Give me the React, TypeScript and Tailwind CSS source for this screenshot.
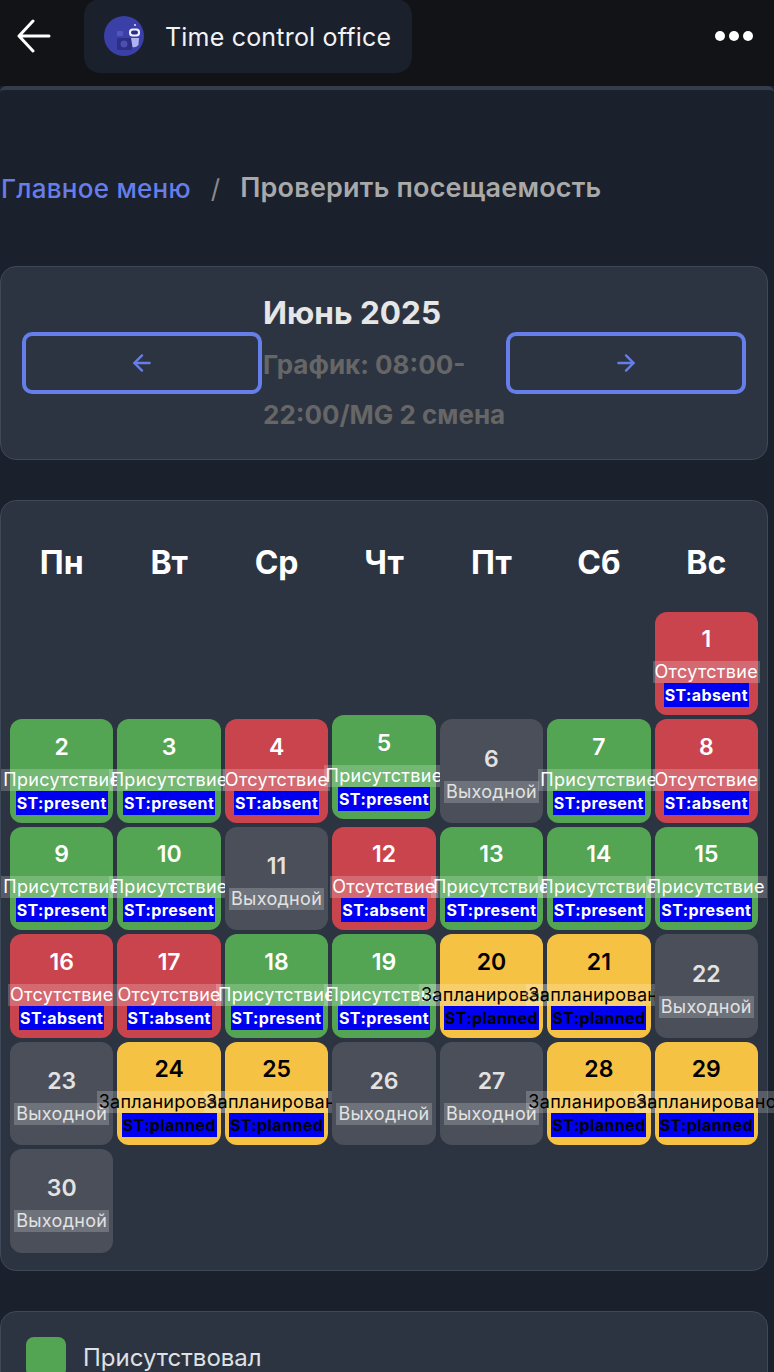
import { ArrowLeft, ArrowRight } from 'lucide-react';

type Status = 'present' | 'absent' | 'planned' | 'off';

const WEEKDAYS = ['Пн', 'Вт', 'Ср', 'Чт', 'Пт', 'Сб', 'Вс'];

const DAYS: Status[] = [
  'absent',
  'present', 'present', 'absent', 'present', 'off', 'present', 'absent',
  'present', 'present', 'off', 'absent', 'present', 'present', 'present',
  'absent', 'absent', 'present', 'present', 'planned', 'planned', 'off',
  'off', 'planned', 'planned', 'off', 'off', 'planned', 'planned',
  'off',
];

const CELL_STYLES: Record<Status, string> = {
  present: 'bg-[#53a553] text-white',
  absent: 'bg-[#ca444e] text-white',
  planned: 'bg-[#f5c244] text-black',
  off: 'bg-[#4a4f59] text-[#e2e2e2]',
};

const LABELS: Record<Status, string> = {
  present: 'Присутствие',
  absent: 'Отсутствие',
  planned: 'Запланировано',
  off: 'Выходной',
};

function BotAvatar() {
  return (
    <svg viewBox="0 0 40 40" className="h-10 w-10 shrink-0">
      <circle cx="20" cy="20" r="20" fill="#3b3fa8" />
      <rect x="13" y="15" width="6" height="5" rx="1" fill="#5156bd" />
      <rect x="13" y="22" width="15" height="12" rx="1.5" fill="#2c2f85" />
      <circle cx="20" cy="28" r="3.5" fill="#4a4fb0" />
      <circle cx="31" cy="9" r="1" fill="#dfe3ff" />
      <rect x="25" y="12.5" width="11" height="8" rx="3.5" fill="#eef0ff" />
      <rect x="27" y="14.5" width="7" height="4" rx="2" fill="#2a2d8a" />
      <path d="M27 22h8l-0.5 7q-3 3-6 2z" fill="#aeb4f0" />
    </svg>
  );
}

function DayCell({ day, status }: { day: number; status: Status }) {
  return (
    <div
      className={`relative flex aspect-square flex-col items-center justify-center rounded-[12px] pt-[3px] ${CELL_STYLES[status]} ${
        day === 5 ? '-translate-y-1' : ''
      }`}
    >
      <div className="mb-[6px] text-[23px] leading-[32px] font-semibold">{day}</div>
      <div className="bg-white/20 px-[2px] text-[18px] leading-[22px] tracking-[0.3px] whitespace-nowrap">{LABELS[status]}</div>
      {status !== 'off' && (
        <div className="bg-[#0000f0] px-[1px] text-[16px] leading-[24px] font-bold tracking-[0.4px] whitespace-nowrap">
          ST:{status}
        </div>
      )}
    </div>
  );
}

export default function App() {
  return (
    <div className="h-[1372px] w-[774px] overflow-hidden bg-[#1a202c] font-['Inter',sans-serif]">
      <header className="flex h-[86px] items-start justify-between bg-[#111316] pr-[21px] pl-[17px]">
        <div className="flex items-start gap-[33px]">
          <svg viewBox="0 0 34 34" className="mt-[19px] h-[34px] w-[34px]" fill="none" stroke="white" strokeWidth="3" strokeLinecap="round" strokeLinejoin="round">
            <path d="M32 17H2M16 2L2 17l14 15" />
          </svg>
          <div className="-mt-[1px] flex h-[74px] w-[328px] items-center gap-[21px] rounded-[16px] bg-[#1a202c] pl-[20px]">
            <BotAvatar />
            <span className="mt-[3px] text-[25px] tracking-[0.2px] text-[#f3f3f3]">Time control office</span>
          </div>
        </div>
        <div className="mt-[31px] flex gap-[4px]">
          <span className="h-[10px] w-[10px] rounded-full bg-white" />
          <span className="h-[10px] w-[10px] rounded-full bg-white" />
          <span className="h-[10px] w-[10px] rounded-full bg-white" />
        </div>
      </header>

      <main className="rounded-t-[6px] border-t-[4px] border-[#333d4c] pr-[6px]">
        <nav className="flex h-[176px] items-center pt-[20px] font-medium">
          <span className="pl-[1px] text-[26px] tracking-[0.25px] text-[#667eea]">Главное меню</span>
          <span className="mx-[20px] text-[26px] font-normal text-[#8a8a8a]">/</span>
          <span className="text-[27px] font-semibold tracking-[0.2px] text-[#a9a9a9]">Проверить посещаемость</span>
        </nav>

        <section className="flex h-[194px] items-center justify-between rounded-[16px] border border-[#3d4859] bg-[#2d3441] px-[21px]">
          <button type="button" className="flex h-[62px] w-[240px] items-center justify-center rounded-[10px] border-[4px] border-[#667eea] text-[#667eea]">
            <ArrowLeft size={26} strokeWidth={2.2} />
          </button>
          <div className="w-[244px] pt-[4px] pl-[1px]">
            <h2 className="mb-[4px] text-[31.5px] leading-[46px] font-bold text-[#e6e6e6]">Июнь 2025</h2>
            <p className="text-[26px] leading-[50px] font-bold text-[#666666]">График: 08:00-22:00/MG 2 смена</p>
          </div>
          <button type="button" className="flex h-[62px] w-[240px] items-center justify-center rounded-[10px] border-[4px] border-[#667eea] text-[#667eea]">
            <ArrowRight size={26} strokeWidth={2.2} />
          </button>
        </section>

        <section className="mt-[40px] rounded-[16px] border border-[#3d4859] bg-[#2d3441] px-[9px] pt-[40px] pb-[17px]">
          <div className="grid grid-cols-7 gap-[4px]">
            {WEEKDAYS.map((name) => (
              <div key={name} className="mb-[23px] text-center text-[32px] leading-[44px] font-bold text-white">
                {name}
              </div>
            ))}
            {Array.from({ length: 6 }, (_, i) => (
              <div key={i} />
            ))}
            {DAYS.map((status, i) => (
              <DayCell key={i} day={i + 1} status={status} />
            ))}
          </div>
        </section>

        <section className="mt-[40px] flex items-start gap-[17px] rounded-[16px] border border-[#3d4859] bg-[#2d3441] px-[25px] pt-[25px] pb-[25px]">
          <span className="h-[40px] w-[40px] shrink-0 rounded-[8px] bg-[#53a553]" />
          <span className="mt-[3px] text-[24px] leading-[36px] text-[#dfe1e5]">Присутствовал</span>
        </section>
      </main>
    </div>
  );
}
